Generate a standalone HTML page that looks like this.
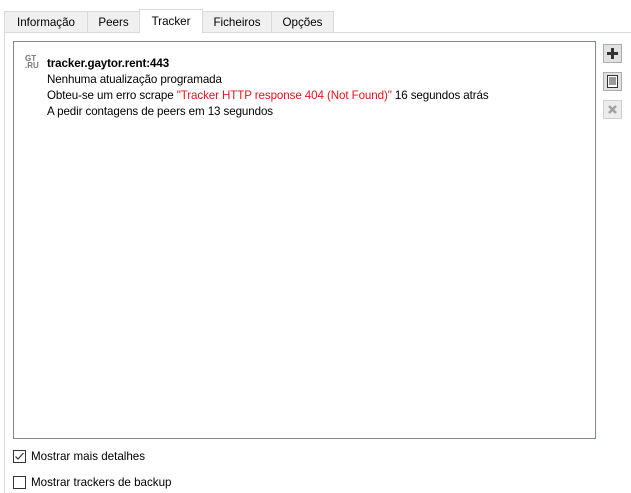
<!DOCTYPE html>
<html style="overflow:hidden;height:493px"><head><style>
body{margin:0;width:631px;height:493px;background:#fff;font-family:"Liberation Sans",sans-serif;font-size:11.6px;color:#000;position:relative;overflow:hidden}
.tab{position:absolute;top:11px;height:21px;background:#f0f0f0;border:1px solid #d9d9d9;border-bottom:none;box-sizing:border-box;text-align:center;line-height:21px}
.sel{top:9px;height:24px;background:#fff;border-color:#d9d9d9;line-height:24px;z-index:2}
.panel{position:absolute;left:4px;top:32px;width:627px;height:462px;border:1px solid #d9d9d9;border-right:none;box-sizing:border-box}
.list{position:absolute;left:13px;top:41px;width:583px;height:398px;border:1px solid #828790;box-sizing:border-box}
.t{position:absolute;left:47px;white-space:nowrap;letter-spacing:-0.1px}
.btn{position:absolute;left:603px;width:19px;height:19px;background:#e1e1e1;border:1px solid #adadad;box-sizing:border-box}
.cb{position:absolute;left:13px;width:13px;height:13px;border:1px solid #333;box-sizing:border-box;background:#fff}
</style></head><body>
<div class="panel"></div>
<div class="tab" style="left:4px;width:84px">Informação</div>
<div class="tab" style="left:87px;width:53px">Peers</div>
<div class="tab sel" style="left:139px;width:64px">Tracker</div>
<div class="tab" style="left:202px;width:70px">Ficheiros</div>
<div class="tab" style="left:271px;width:63px">Opções</div>
<div class="list"></div>
<div style="position:absolute;left:25px;top:55px;font-size:8px;line-height:7px;color:#777;font-weight:bold">GT<br>.RU</div>
<div class="t" style="top:57px;font-weight:bold">tracker.gaytor.rent:443</div>
<div class="t" style="top:73px">Nenhuma atualização programada</div>
<div class="t" style="top:89px">Obteu-se um erro scrape <span style="color:#e8141e">"Tracker HTTP response 404 (Not Found)"</span> 16 segundos atrás</div>
<div class="t" style="top:105px">A pedir contagens de peers em 13 segundos</div>
<div class="btn" style="top:44px"><svg width="17" height="17" viewBox="0 0 17 17"><path d="M7 3h3v4h4v3h-4v4H7v-4H3V7h4z" fill="#333"/></svg></div>
<div class="btn" style="top:72px"><svg width="17" height="17" viewBox="0 0 17 17"><rect x="3.5" y="2.5" width="10" height="12" fill="#fff" stroke="#333"/><path d="M5 5h7M5 7h7M5 9h7M5 11h7" stroke="#333"/></svg></div>
<div class="btn" style="top:100px;background:#ececec;border-color:#d0d0d0"><svg width="17" height="17" viewBox="0 0 17 17"><path d="M5 5l7 7M12 5l-7 7" stroke="#a0a0a0" stroke-width="2.5"/></svg></div>
<div class="cb" style="top:450px"><svg width="11" height="11" viewBox="0 0 11 11" style="display:block"><path d="M1.5 5.5l2.5 2.5 5.5-6" stroke="#333" fill="none" stroke-width="1.2"/></svg></div>
<div style="position:absolute;left:31px;top:450px">Mostrar mais detalhes</div>
<div class="cb" style="top:476px"></div>
<div style="position:absolute;left:31px;top:476px">Mostrar trackers de backup</div>
</body></html>
